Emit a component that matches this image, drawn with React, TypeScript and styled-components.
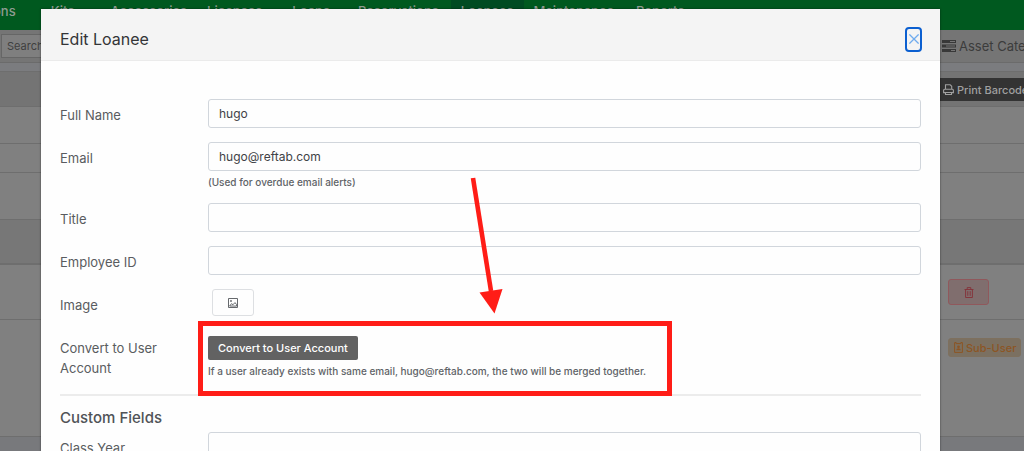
import React from 'react';
import styled, { createGlobalStyle } from 'styled-components';

const GlobalStyle = createGlobalStyle`
  * { box-sizing: border-box; }
  html, body, #root { height: 100%; }
  body {
    margin: 0;
    overflow: hidden;
    background: #808080;
    color: #53565a;
    font-family: Inter, "Liberation Sans", sans-serif;
    font-size: 13px;
    line-height: 20px;
  }
  button, input { font-family: inherit; }
  svg { flex: none; }
`;

const Screen = styled.div`
  position: relative;
  min-height: 100%;
  overflow: hidden;
`;

const Page = styled.div`
  display: flex;
  flex-direction: column;
`;

const Nav = styled.nav`
  display: flex;
  height: 30px;
  background: #00591f;
  overflow: hidden;
`;

const NavLink = styled.a<{ $active?: boolean; $space?: number }>`
  flex: none;
  padding: 1px 10px 9px;
  margin-left: ${(p) => p.$space ?? 0}px;
  background: ${(p) => (p.$active ? '#004b22' : 'transparent')};
  color: #8f9c92;
  font-weight: 500;
  text-decoration: none;
`;

const Toolbar = styled.div`
  display: flex;
  justify-content: space-between;
  align-items: center;
  height: 33px;
  background: #757575;
  border-bottom: 1px solid #6b6b6b;
`;

const Search = styled.input`
  width: 200px;
  height: 24px;
  margin-left: 1px;
  padding: 0 5px;
  border: 1px solid #666;
  background: #7f7f7f;
  color: #404040;
  font-size: 11px;
  &::placeholder { color: #404040; opacity: 1; }
`;

const Category = styled.a`
  display: flex;
  align-items: center;
  gap: 3px;
  width: 82px;
  overflow: hidden;
  white-space: nowrap;
  color: #3c3c3c;
  text-decoration: none;
`;

const Strip = styled.div<{ $h: number; $bg?: string; $line?: number }>`
  display: flex;
  justify-content: flex-end;
  align-items: flex-start;
  height: ${(p) => p.$h}px;
  background: ${(p) => p.$bg ?? '#808080'};
  border-bottom: ${(p) => p.$line ?? 1}px solid #6e6e6e;
`;

const PrintButton = styled.button`
  display: flex;
  align-items: center;
  gap: 3px;
  width: 88px;
  height: 23px;
  margin-top: 6px;
  padding: 0 0 0 7px;
  border: 0;
  overflow: hidden;
  white-space: nowrap;
  background: #333;
  color: #a0a0a0;
  font-size: 11px;
  font-weight: 500;
`;

const RowAction = styled.div`
  width: 76px;
  padding-top: 14px;
`;

const DeleteButton = styled.button`
  display: flex;
  align-items: center;
  justify-content: center;
  width: 41px;
  height: 26px;
  padding: 0;
  border: 1px solid #90585c;
  border-radius: 3px;
  background: #806e6e;
  color: #84363d;
`;

const Tag = styled.span`
  display: inline-flex;
  align-items: center;
  gap: 3px;
  height: 19px;
  margin-top: 4px;
  padding: 0 4px 0 5px;
  border: 1px solid #7e705e;
  border-radius: 3px;
  background: #7b7061;
  color: #8c5524;
  font-size: 11px;
  font-weight: 500;
  white-space: nowrap;
`;

const Overlay = styled.div`
  position: absolute;
  inset: 0;
  padding: 9px 84px 0 41px;
`;

const Dialog = styled.section`
  position: relative;
  min-height: 100%;
  background: #fefefe;
  box-shadow: 0 0 2px rgba(0, 0, 0, 0.5);
`;

const DialogHeader = styled.header`
  display: flex;
  justify-content: space-between;
  align-items: center;
  height: 52px;
  padding: 9px 18px 0 19px;
  background: #f4f4f4;
  border-bottom: 1px solid #ebebeb;
`;

const DialogTitle = styled.h1`
  margin: 0;
  color: #333437;
  font-size: 16px;
  font-weight: 400;
`;

const CloseButton = styled.button`
  display: flex;
  align-items: center;
  justify-content: center;
  width: 17px;
  height: 25px;
  padding: 0;
  border: 2px solid #0b5fd0;
  border-radius: 4px;
  background: #f4f4f4;
  color: #6fabee;
`;

const Form = styled.form`
  display: flex;
  flex-direction: column;
  gap: 14px;
  padding: 38px 19px 20px;
`;

const Row = styled.div`
  display: grid;
  grid-template-columns: 148px minmax(0, 1fr);
  min-height: 29px;
`;

const labelStyle = `
  padding: 6px 30px 0 0;
  color: #595c60;
`;

const Label = styled.label`${labelStyle}`;

const Caption = styled.span`
  ${labelStyle}
  margin-bottom: -4px;
`;

const Input = styled.input`
  display: block;
  width: 100%;
  height: 29px;
  padding: 0 10px;
  border: 1px solid #d1d6dc;
  border-radius: 3px;
  background: #fefefe;
  color: #3f4246;
  font-size: 12px;
  outline: 0;
`;

const Hint = styled.p`
  margin: 0;
  padding: 1px 0;
  color: #606367;
  font-size: 10px;
  font-weight: 500;
  line-height: 20px;
  white-space: nowrap;
`;

const ShortHint = styled(Hint)`
  padding-bottom: 0;
  margin-bottom: -3px;
`;

const UploadButton = styled.button`
  display: flex;
  align-items: center;
  justify-content: center;
  width: 42px;
  height: 27px;
  margin-left: 4px;
  padding: 0;
  border: 1px solid #dddfe2;
  border-radius: 3px;
  background: #fefefe;
  color: #55585c;
`;

const ActionCell = styled.div`
  position: relative;
  padding-top: 4px;
`;

const ConvertButton = styled.button`
  display: block;
  height: 24px;
  padding: 0 10px;
  border: 0;
  border-radius: 2px;
  background: #626262;
  color: #fff;
  font-size: 11px;
  font-weight: 500;
`;

const Highlight = styled.div`
  position: absolute;
  top: -11px;
  left: -10px;
  width: 474px;
  height: 75px;
  border: 5px solid #ff1d17;
  pointer-events: none;
`;

const Arrow = styled.svg`
  position: absolute;
  top: 166px;
  left: 424px;
  pointer-events: none;
`;

const Divider = styled.hr`
  width: 100%;
  height: 2px;
  margin: -2px 0 -4px;
  border: 0;
  background: #ececec;
`;

const SectionTitle = styled.h2`
  margin: 0 0 -12px;
  color: #505357;
  font-size: 15px;
  font-weight: 500;
  line-height: 24px;
`;

const ListIcon = () => (
  <svg width="14" height="12" viewBox="0 0 14 12" aria-hidden="true">
    <path d="M0 0h14v3H0zM0 4.5h14v3H0zM0 9h14v3H0z" fill="#383838" />
    <path d="M8 1.5h5M4 6h9M9 10.5h4" stroke="#757575" />
  </svg>
);

const PrintIcon = () => (
  <svg width="11" height="11" viewBox="0 0 11 11" fill="none" stroke="currentColor" aria-hidden="true">
    <path d="M2.5 5V.8h4.7l1.5 1.5V5M2.5 8.5v2h6v-2zM2 8.6H.6V6.2q0-1 1-1h7.8q1 0 1 1v2.4H9" strokeWidth="1.1" />
  </svg>
);

const TrashIcon = () => (
  <svg width="10" height="11" viewBox="0 0 10 11" fill="none" stroke="currentColor" aria-hidden="true">
    <path d="M.5 2.5h9M3.2 2.3V.6h3.6v1.7M1.6 2.5v8h6.8v-8M3.8 4.2v4.6M6.2 4.2v4.6" />
  </svg>
);

const BadgeIcon = () => (
  <svg width="9" height="11" viewBox="0 0 9 11" fill="none" stroke="currentColor" aria-hidden="true">
    <path d="M.6.6h1.6v1h4.6v-1h1.6v9.8H.6z" />
    <path d="M2.2 8.3q0-2 2.3-2t2.3 2z" fill="currentColor" stroke="none" />
    <circle cx="4.5" cy="4.8" r="1.4" fill="currentColor" stroke="none" />
  </svg>
);

const CloseIcon = () => (
  <svg width="10" height="10" viewBox="0 0 10 10" stroke="currentColor" strokeWidth="1.3" aria-hidden="true">
    <path d="M.4.4l9.2 9.2M9.6.4L.4 9.6" />
  </svg>
);

const PictureIcon = () => (
  <svg width="10" height="10" viewBox="0 0 10 10" fill="none" stroke="currentColor" strokeWidth=".9" aria-hidden="true">
    <path d="M.5.5h9v9h-9zM1.6 8l2-2.4 1.3 1.2L7 4.6 8.6 6.6v1.5z" />
    <circle cx="3" cy="3" r=".6" />
  </svg>
);

const links = [
  { name: 'Kits', space: 15 },
  { name: 'Accessories', space: 16 },
  { name: 'Licenses' },
  { name: 'Loans', space: 10 },
  { name: 'Reservations', space: 8 },
  { name: 'Loanees', active: true, space: 2 },
  { name: 'Maintenance' },
  { name: 'Reports', space: 2 },
];

const Field = ({ id, label, value, hint }: { id: string; label: string; value?: string; hint?: string }) => (
  <Row>
    <Label htmlFor={id}>{label}</Label>
    <div>
      <Input id={id} defaultValue={value} />
      {hint && <ShortHint>{hint}</ShortHint>}
    </div>
  </Row>
);

export default function App() {
  return (
    <Screen>
      <GlobalStyle />
      <Page>
        <Nav>
          <NavLink href="#" $space={-17}>ons</NavLink>
          {links.map((l) => (
            <NavLink key={l.name} href="#" $active={l.active} $space={l.space}>{l.name}</NavLink>
          ))}
        </Nav>
        <Toolbar>
          <Search placeholder="Search" aria-label="Search" />
          <Category href="#"><ListIcon />Asset Cate</Category>
        </Toolbar>
        <Strip $h={9} $bg="#7b7c7f" />
        <Strip $h={35} $bg="#747474">
          <PrintButton type="button"><PrintIcon />Print Barcode</PrintButton>
        </Strip>
        <Strip $h={37} />
        <Strip $h={29} />
        <Strip $h={47} />
        <Strip $h={45} $bg="#777" $line={2} />
        <Strip $h={55}>
          <RowAction>
            <DeleteButton type="button" aria-label="Delete"><TrashIcon /></DeleteButton>
          </RowAction>
        </Strip>
        <Strip $h={117}>
          <RowAction><Tag><BadgeIcon />Sub-User</Tag></RowAction>
        </Strip>
        <Strip $h={15} $bg="#78797c" $line={0} />
      </Page>
      <Overlay>
        <Dialog role="dialog" aria-labelledby="dialog-title">
          <DialogHeader>
            <DialogTitle id="dialog-title">Edit Loanee</DialogTitle>
            <CloseButton type="button" aria-label="Close"><CloseIcon /></CloseButton>
          </DialogHeader>
          <Form>
            <Field id="name" label="Full Name" value="hugo" />
            <Field id="email" label="Email" value="hugo@reftab.com" hint="(Used for overdue email alerts)" />
            <Field id="title" label="Title" />
            <Field id="employee" label="Employee ID" />
            <Row>
              <Label htmlFor="image">Image</Label>
              <UploadButton id="image" type="button"><PictureIcon /></UploadButton>
            </Row>
            <Row>
              <Caption>Convert to User Account</Caption>
              <ActionCell>
                <ConvertButton type="button">Convert to User Account</ConvertButton>
                <Hint>If a user already exists with same email, hugo@reftab.com, the two will be merged together.</Hint>
                <Highlight />
              </ActionCell>
            </Row>
            <Divider />
            <SectionTitle>Custom Fields</SectionTitle>
            <Field id="class-year" label="Class Year" />
          </Form>
          <Arrow width="44" height="142" viewBox="0 0 44 142" aria-hidden="true">
            <path d="M8 3L26 116" stroke="#ff1d17" strokeWidth="4.6" />
            <path d="M14.5 117.5L37.5 114L29.5 138.5z" fill="#ff1d17" />
          </Arrow>
        </Dialog>
      </Overlay>
    </Screen>
  );
}
